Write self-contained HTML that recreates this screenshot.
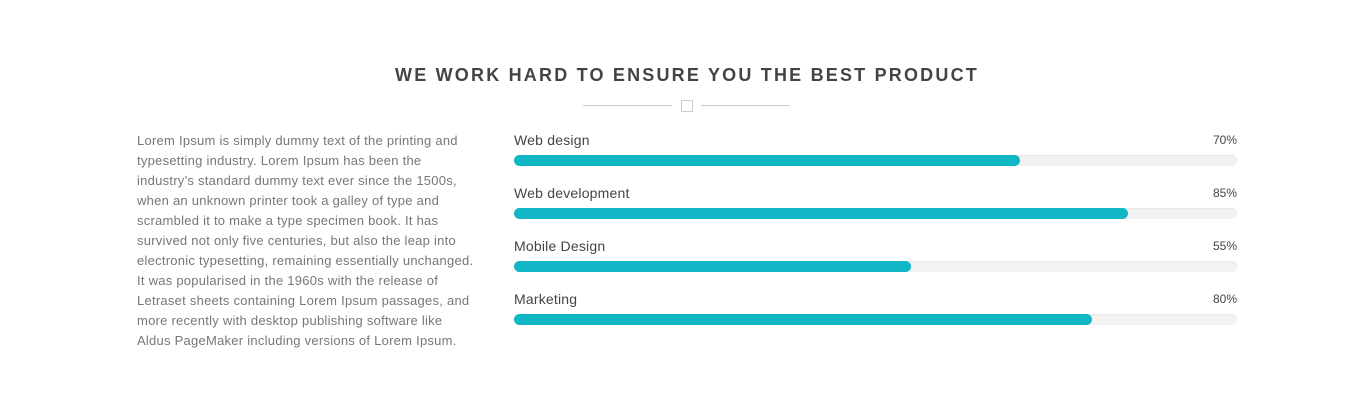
<!DOCTYPE html>
<html><head><style>
body{margin:0;width:1349px;height:414px;background:#fff;font-family:"Liberation Sans",sans-serif;position:relative;overflow:hidden}
h2{position:absolute;top:64px;left:0;width:1374px;text-align:center;margin:0;font-size:18px;font-weight:bold;letter-spacing:2.2px;color:#444;line-height:22px}
.ln{position:absolute;top:105px;height:1px;background:#ccc;width:89px}
.sq{position:absolute;left:681px;top:100px;width:10px;height:10px;border:1px solid #ccc}
p{position:absolute;left:137px;top:131px;margin:0;font-size:13px;letter-spacing:0.25px;line-height:20px;color:#777;white-space:nowrap}
.row{position:absolute;left:514px;width:723px}
.lab{position:absolute;left:0;top:0;font-size:14px;letter-spacing:0.2px;color:#444;line-height:18px}
.pc{position:absolute;right:0;top:1px;font-size:12px;color:#444;line-height:16px}
.bar{position:absolute;left:0;top:24px;width:723px;height:11px;background:#f2f2f2;border-radius:6px;box-shadow:inset 0 1px 1px #e6e6e6}
.f{height:11px;background:#11b7c5;border-radius:6px}
</style></head><body>
<h2>WE WORK HARD TO ENSURE YOU THE BEST PRODUCT</h2>
<div class="ln" style="left:583px"></div><div class="sq"></div><div class="ln" style="left:701px"></div>
<p>Lorem Ipsum is simply dummy text of the printing and<br>typesetting industry. Lorem Ipsum has been the<br>industry’s standard dummy text ever since the 1500s,<br>when an unknown printer took a galley of type and<br>scrambled it to make a type specimen book. It has<br>survived not only five centuries, but also the leap into<br>electronic typesetting, remaining essentially unchanged.<br>It was popularised in the 1960s with the release of<br>Letraset sheets containing Lorem Ipsum passages, and<br>more recently with desktop publishing software like<br>Aldus PageMaker including versions of Lorem Ipsum.</p>
<div class="row" style="top:131px"><div class="lab">Web design</div><div class="pc">70%</div><div class="bar"><div class="f" style="width:506px"></div></div></div>
<div class="row" style="top:184px"><div class="lab">Web development</div><div class="pc">85%</div><div class="bar"><div class="f" style="width:614px"></div></div></div>
<div class="row" style="top:237px"><div class="lab">Mobile Design</div><div class="pc">55%</div><div class="bar"><div class="f" style="width:397px"></div></div></div>
<div class="row" style="top:290px"><div class="lab">Marketing</div><div class="pc">80%</div><div class="bar"><div class="f" style="width:578px"></div></div></div>
</body></html>
